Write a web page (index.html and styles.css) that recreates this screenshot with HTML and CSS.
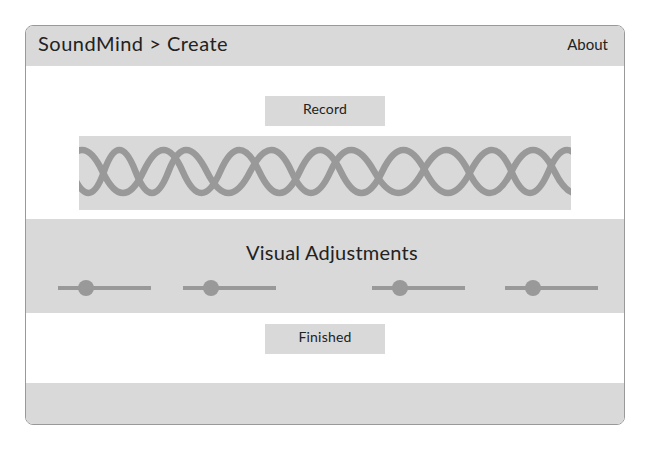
FILE: index.html
```html
<!DOCTYPE html>
<html>
<head>
<meta charset="utf-8">
<link rel="stylesheet" href="styles.css">
</head>
<body>
<div class="frame">
  <header class="topbar">
    <div class="title">SoundMind &gt; Create</div>
    <div class="about">About</div>
  </header>
  <section class="record-area">
    <div class="btn">Record</div>
    <div class="wave">
      <svg width="492" height="74" viewBox="0 0 492 74">
        <g fill="none" stroke="#999999" stroke-width="6.5" stroke-linecap="round" stroke-linejoin="round">
          <path d="M-17.5,35.5 Q3,-7.5 23.5,35.5 Q44,78.5 64.5,35.5 Q85,-7.5 103.75,35.5 Q122.5,78.5 141.25,35.5 Q160,-7.5 180.25,35.5 Q200.5,78.5 220.75,35.5 Q241,-7.5 261.75,35.5 Q282.5,78.5 303.25,35.5 Q324,-7.5 346.5,35.5 Q369,78.5 391.5,35.5 Q414,-7.5 432.5,35.5 Q451,78.5 469.5,35.5 Q488,-7.5 506.5,35.5"/>
          <path d="M-45,35.5 Q-25,-7.5 -7.5,35.5 Q10,78.5 25,35.5 Q40,-7.5 56.5,35.5 Q73,78.5 89.5,35.5 Q106,-7.5 127.75,35.5 Q149.5,78.5 171.25,35.5 Q193,-7.5 212.5,35.5 Q232,78.5 251.5,35.5 Q271,-7.5 295.25,35.5 Q319.5,78.5 343.75,35.5 Q368,-7.5 389.5,35.5 Q411,78.5 432.5,35.5 Q454,-7.5 475.5,35.5 Q497,78.5 517,35.5"/>
        </g>
      </svg>
    </div>
  </section>
  <section class="adjust">
    <h2 class="adjust-title">Visual Adjustments</h2>
    <div class="sliders">
      <div class="group group-left">
        <div class="slider"><span class="knob"></span></div>
        <div class="slider"><span class="knob"></span></div>
      </div>
      <div class="group group-right">
        <div class="slider"><span class="knob"></span></div>
        <div class="slider"><span class="knob"></span></div>
      </div>
    </div>
  </section>
  <section class="finish-area">
    <div class="btn">Finished</div>
  </section>
  <footer class="footer"></footer>
</div>
</body>
</html>
```
FILE: styles.css
```css
* { box-sizing: border-box; }
html, body { margin: 0; padding: 0; background: #ffffff; }
body { font-family: Lato, "Noto Sans", sans-serif; color: #222222; }

.frame {
  margin: 25px 0 0 25px;
  width: 600px;
  height: 400px;
  border: 1px solid #999999;
  border-radius: 8px;
  overflow: hidden;
  display: flex;
  flex-direction: column;
  background: #ffffff;
}

.topbar {
  height: 40px;
  flex: none;
  background: #d9d9d9;
  display: flex;
  align-items: center;
  justify-content: space-between;
  padding: 0 16px 6px 12px;
}
.title { font-size: 20px; letter-spacing: 0.5px; }
.about { font-size: 15px; padding-top: 2px; }

.record-area {
  height: 153px;
  flex: none;
  display: flex;
  flex-direction: column;
  align-items: center;
  padding-top: 30px;
}
.btn {
  width: 120px;
  height: 30px;
  background: #d9d9d9;
  font-size: 14px;
  letter-spacing: 0.2px;
  display: flex;
  align-items: center;
  justify-content: center;
  padding-bottom: 5px;
}
.wave {
  margin-top: 10px;
  width: 492px;
  height: 74px;
  background: #d9d9d9;
  overflow: hidden;
}
.wave svg { display: block; }

.adjust {
  height: 94px;
  flex: none;
  background: #d9d9d9;
  padding-top: 21px;
}
.adjust-title {
  margin: 0;
  padding-left: 14px;
  font-weight: normal;
  font-size: 20px;
  line-height: 24px;
  letter-spacing: 0.25px;
  text-align: center;
}
.sliders {
  margin-top: 16px;
  display: flex;
  justify-content: space-between;
  padding: 0 26px 0 32px;
}
.group { display: flex; }
.group-left { gap: 32px; }
.group-right { gap: 40px; }
.slider {
  position: relative;
  width: 93px;
  height: 16px;
}
.slider::before {
  content: "";
  position: absolute;
  left: 0; right: 0; top: 6px;
  height: 4px;
  background: #999999;
}
.knob {
  position: absolute;
  top: 0;
  left: 20px;
  width: 16px;
  height: 16px;
  border-radius: 50%;
  background: #999999;
}

.finish-area {
  height: 70px;
  flex: none;
  display: flex;
  justify-content: center;
  padding-top: 11px;
}

.footer {
  flex: 1;
  background: #d9d9d9;
}
```
